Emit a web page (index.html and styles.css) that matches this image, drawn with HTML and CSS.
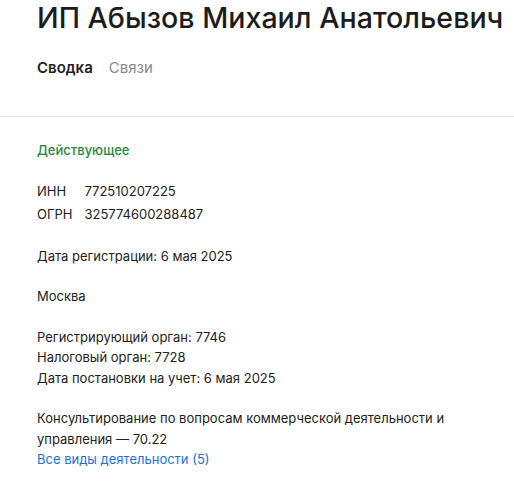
FILE: index.html
```html
<!DOCTYPE html>
<html lang="ru">
<head>
<meta charset="utf-8">
<link rel="stylesheet" href="styles.css">
</head>
<body>
<header class="head">
  <h1 class="title">ИП Абызов Михаил Анатольевич</h1>
  <nav class="tabs">
    <span class="tab active">Сводка</span>
    <span class="tab">Связи</span>
  </nav>
</header>
<main class="content">
  <div class="status">Действующее</div>
  <table class="ids">
    <tr><td class="k">ИНН</td><td>772510207225</td></tr>
    <tr><td class="k">ОГРН</td><td>325774600288487</td></tr>
  </table>
  <p class="block">Дата регистрации: 6 мая 2025</p>
  <p class="block">Москва</p>
  <p class="block">Регистрирующий орган: 7746<br>Налоговый орган: 7728<br>Дата постановки на учет: 6 мая 2025</p>
  <p class="block">Консультирование по вопросам коммерческой деятельности и управления — 70.22<br><a class="link" href="#">Все виды деятельности (5)</a></p>
</main>
</body>
</html>
```
FILE: styles.css
```css
* { box-sizing: border-box; }
body {
  margin: 0;
  font-family: Inter, "Noto Sans", sans-serif;
  color: #222;
  background: #fff;
  overflow: hidden;
}
.head {
  padding: 0 0 0 37px;
  border-bottom: 1px solid #e6e6e6;
  height: 117px;
}
.title {
  margin: 0;
  padding-top: 1px;
  font-size: 28.6px;
  font-weight: 500;
  line-height: 34px;
  white-space: nowrap;
  color: #1c1c1c;
}
.tabs {
  display: flex;
  gap: 16px;
  margin-top: 23px;
  font-size: 15px;
  line-height: 20px;
}
.tab { color: #8a8a8a; }
.tab.active { color: #222; font-weight: 600; }
.content {
  padding: 23px 37px 0;
  font-size: 13px;
  line-height: 20.5px;
}
.status {
  color: #1f8a3b;
  font-weight: 500;
}
.ids {
  border-collapse: collapse;
  margin-top: 19px;
}
.ids td { padding: 0; height: 23px; }
.ids .k { padding-right: 12px; }
.block { margin: 20px 0 0; }
.link { color: #1a73d9; text-decoration: none; }
```
